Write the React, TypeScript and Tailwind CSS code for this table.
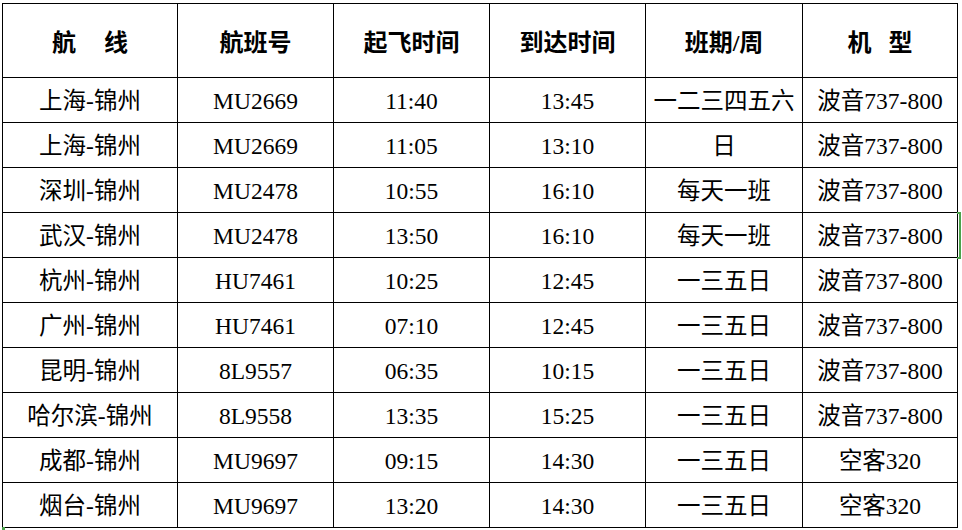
import React from 'react';

const flights = [
  ['上海-锦州', 'MU2669', '11:40', '13:45', '一二三四五六', '波音737-800'],
  ['上海-锦州', 'MU2669', '11:05', '13:10', '日', '波音737-800'],
  ['深圳-锦州', 'MU2478', '10:55', '16:10', '每天一班', '波音737-800'],
  ['武汉-锦州', 'MU2478', '13:50', '16:10', '每天一班', '波音737-800'],
  ['杭州-锦州', 'HU7461', '10:25', '12:45', '一三五日', '波音737-800'],
  ['广州-锦州', 'HU7461', '07:10', '12:45', '一三五日', '波音737-800'],
  ['昆明-锦州', '8L9557', '06:35', '10:15', '一三五日', '波音737-800'],
  ['哈尔滨-锦州', '8L9558', '13:35', '15:25', '一三五日', '波音737-800'],
  ['成都-锦州', 'MU9697', '09:15', '14:30', '一三五日', '空客320'],
  ['烟台-锦州', 'MU9697', '13:20', '14:30', '一三五日', '空客320'],
];

const widths = [175, 156, 156, 156, 157, 155];

export default function App() {
  return (
    <main className="relative h-[530px] w-[962px] overflow-hidden bg-white pl-[2px] pt-[3px] text-black font-['Liberation_Serif','Noto_Sans_CJK_SC',serif]">
      <table className="table-fixed border-collapse border border-black">
        <colgroup>
          {widths.map((w, i) => (
            <col key={i} style={{ width: w }} />
          ))}
        </colgroup>
        <thead>
          <tr className="h-[74px] text-[24px] font-bold">
            <th className="border border-black pt-[4px] text-center">
              <span className="mr-[28px]">航</span>线
            </th>
            <th className="border border-black pt-[4px] text-center">航班号</th>
            <th className="border border-black pt-[4px] text-center">起飞时间</th>
            <th className="border border-black pt-[4px] text-center">到达时间</th>
            <th className="border border-black pt-[4px] text-center">班期/周</th>
            <th className="border border-black pt-[4px] text-center">
              <span className="mr-[17px]">机</span>型
            </th>
          </tr>
        </thead>
        <tbody>
          {flights.map((row, r) => (
            <tr key={r} className="h-[45px] text-[23.5px] font-normal">
              {row.map((cell, c) => (
                <td key={c} className="whitespace-nowrap border border-black p-0 pt-[3px] text-center leading-none">
                  {cell}
                </td>
              ))}
            </tr>
          ))}
        </tbody>
      </table>

      {/* selection marks on the right edge and bottom left */}
      <div className="absolute left-[957px] top-[212px] h-[47px] w-[4px] border-y-2 border-r-2 border-[#4ca24c]" />
      <div className="absolute left-[2px] top-[527px] h-[3px] w-[3px] bg-[#4ca24c]" />
    </main>
  );
}
